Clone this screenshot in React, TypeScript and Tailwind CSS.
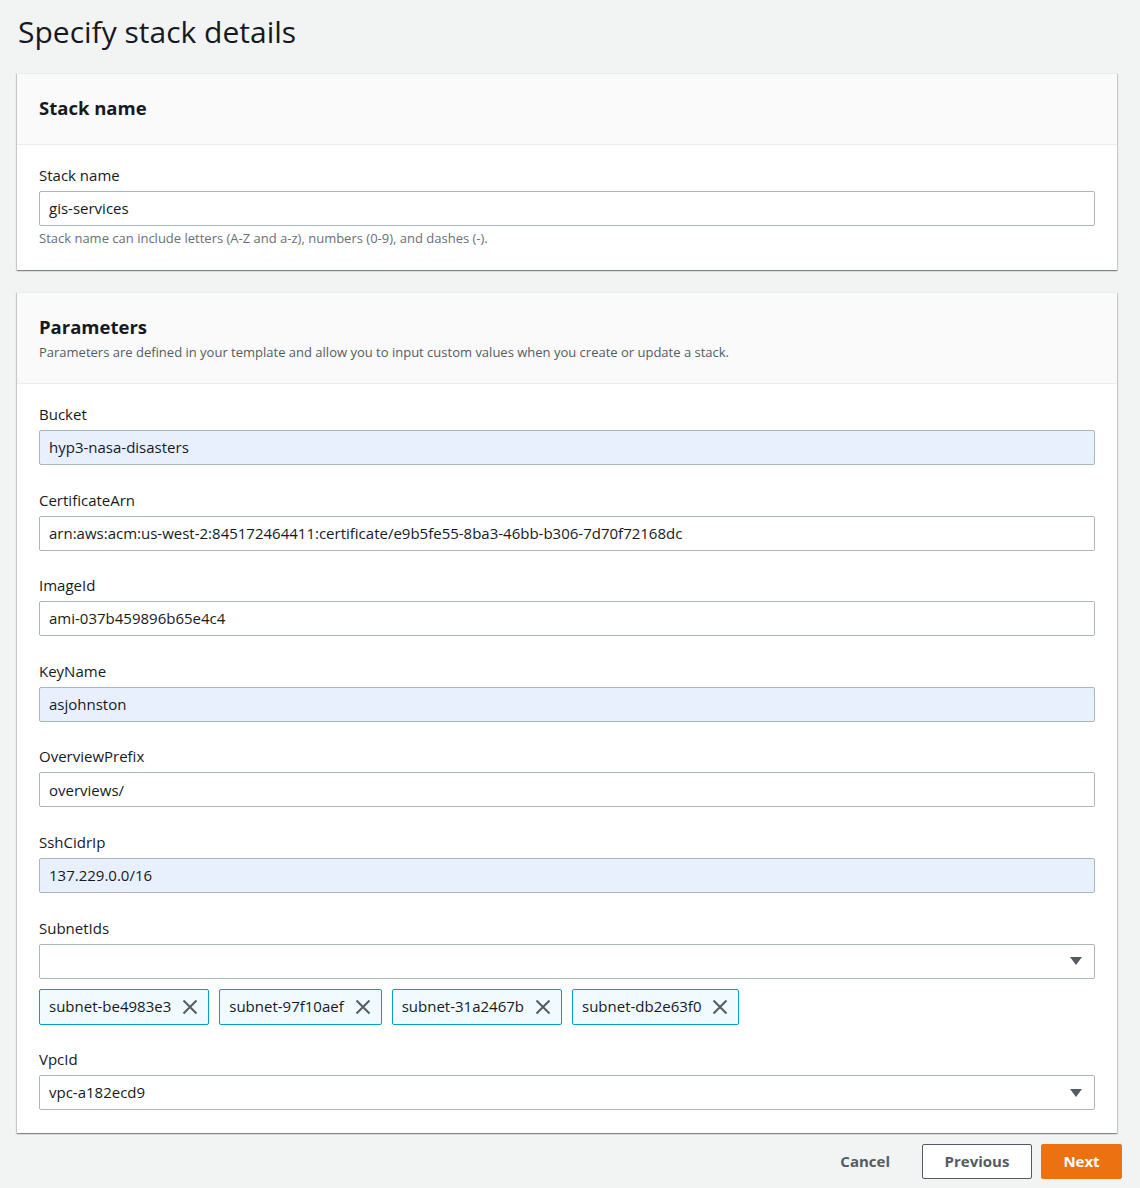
const font = { fontFamily: '"Open Sans", "Noto Sans", sans-serif' };

interface Field {
  label: string;
  value: string;
  autofill?: boolean;
}

const fields: Field[] = [
  { label: 'Bucket', value: 'hyp3-nasa-disasters', autofill: true },
  { label: 'CertificateArn', value: 'arn:aws:acm:us-west-2:845172464411:certificate/e9b5fe55-8ba3-46bb-b306-7d70f72168dc' },
  { label: 'ImageId', value: 'ami-037b459896b65e4c4' },
  { label: 'KeyName', value: 'asjohnston', autofill: true },
  { label: 'OverviewPrefix', value: 'overviews/' },
  { label: 'SshCidrIp', value: '137.229.0.0/16', autofill: true },
];

const subnets = ['subnet-be4983e3', 'subnet-97f10aef', 'subnet-31a2467b', 'subnet-db2e63f0'];

function Caret() {
  return (
    <svg width="12" height="8" viewBox="0 0 12 8" className="shrink-0">
      <path d="M0 0h12L6 8z" fill="#545b64" />
    </svg>
  );
}

function Dismiss() {
  return (
    <svg width="16" height="16" viewBox="0 0 16 16" className="shrink-0">
      <path d="M1.5 1.5l13 13M14.5 1.5l-13 13" stroke="#545b64" strokeWidth="2" fill="none" />
    </svg>
  );
}

function Input({ value, autofill, select }: { value: string; autofill?: boolean; select?: boolean }) {
  return (
    <div
      className={`flex h-[35px] items-center justify-between rounded-[2px] border border-[#aab7b8] pl-[9px] pr-[12px] text-[15px] text-[#16191f] ${
        autofill ? 'bg-[#e8f0fe]' : 'bg-white'
      }`}
    >
      <span>{value}</span>
      {select && <Caret />}
    </div>
  );
}

function Label({ children }: { children: React.ReactNode }) {
  return <div className="mb-[6px] text-[15px] leading-[20px] text-[#16191f]">{children}</div>;
}

function Card({ title, description, children }: { title: string; description?: string; children: React.ReactNode }) {
  return (
    <div className="w-[1100px] border-t border-[#eaeded] bg-white shadow-[0_1px_1px_0_rgba(0,28,36,0.3),1px_1px_1px_0_rgba(0,28,36,0.15),-1px_1px_1px_0_rgba(0,28,36,0.15)]">
      <div className={`border-b border-[#eaeded] bg-[#fafafa] px-[22px] pt-[20px] ${description ? 'pb-[23px]' : 'pb-[22px]'}`}>
        <h2 className="text-[18.5px] font-bold leading-[28px] text-[#16191f]">{title}</h2>
        {description && <p className="mt-[3px] text-[13px] leading-[16px] text-[#545b64]">{description}</p>}
      </div>
      {children}
    </div>
  );
}

export default function App() {
  return (
    <div className="min-h-[1188px] bg-[#f2f3f3] pl-[17px]" style={font}>
      <h1 className="pl-[1px] pt-[12px] text-[30px] leading-[40px] text-[#16191f]">Specify stack details</h1>

      <div className="mt-[21px]">
        <Card title="Stack name">
          <div className="px-[22px] pt-[20px] pb-[24px]">
            <Label>Stack name</Label>
            <Input value="gis-services" />
            <div className="mt-[4px] text-[13px] leading-[16px] text-[#687078]">
              Stack name can include letters (A-Z and a-z), numbers (0-9), and dashes (-).
            </div>
          </div>
        </Card>
      </div>

      <div className="mt-[22px]">
        <Card
          title="Parameters"
          description="Parameters are defined in your template and allow you to input custom values when you create or update a stack."
        >
          <div className="flex flex-col gap-[24.6px] px-[22px] pt-[20px] pb-[23px]">
            {fields.map((f) => (
              <div key={f.label}>
                <Label>{f.label}</Label>
                <Input value={f.value} autofill={f.autofill} />
              </div>
            ))}
            <div>
              <Label>SubnetIds</Label>
              <Input value="" select />
              <div className="mt-[10px] flex gap-[10px]">
                {subnets.map((s) => (
                  <div
                    key={s}
                    className="flex h-[36px] items-center gap-[11px] rounded-[2px] border border-[#00a1c9] bg-[#f1faff] pl-[9px] pr-[10px] text-[15px] text-[#16191f]"
                  >
                    <span>{s}</span>
                    <Dismiss />
                  </div>
                ))}
              </div>
            </div>
            <div>
              <Label>VpcId</Label>
              <Input value="vpc-a182ecd9" select />
            </div>
          </div>
        </Card>
      </div>

      <div className="mt-[11px] flex w-[1105px] items-center justify-end">
        <button className="mr-[32px] text-[15px] font-bold text-[#545b64]">Cancel</button>
        <button className="mr-[9px] h-[35px] w-[110px] rounded-[2px] border border-[#545b64] bg-white text-[15px] font-bold text-[#545b64]">
          Previous
        </button>
        <button className="h-[35px] w-[81px] rounded-[2px] border border-[#ec7211] bg-[#ec7211] text-[15px] font-bold text-white">
          Next
        </button>
      </div>
    </div>
  );
}
